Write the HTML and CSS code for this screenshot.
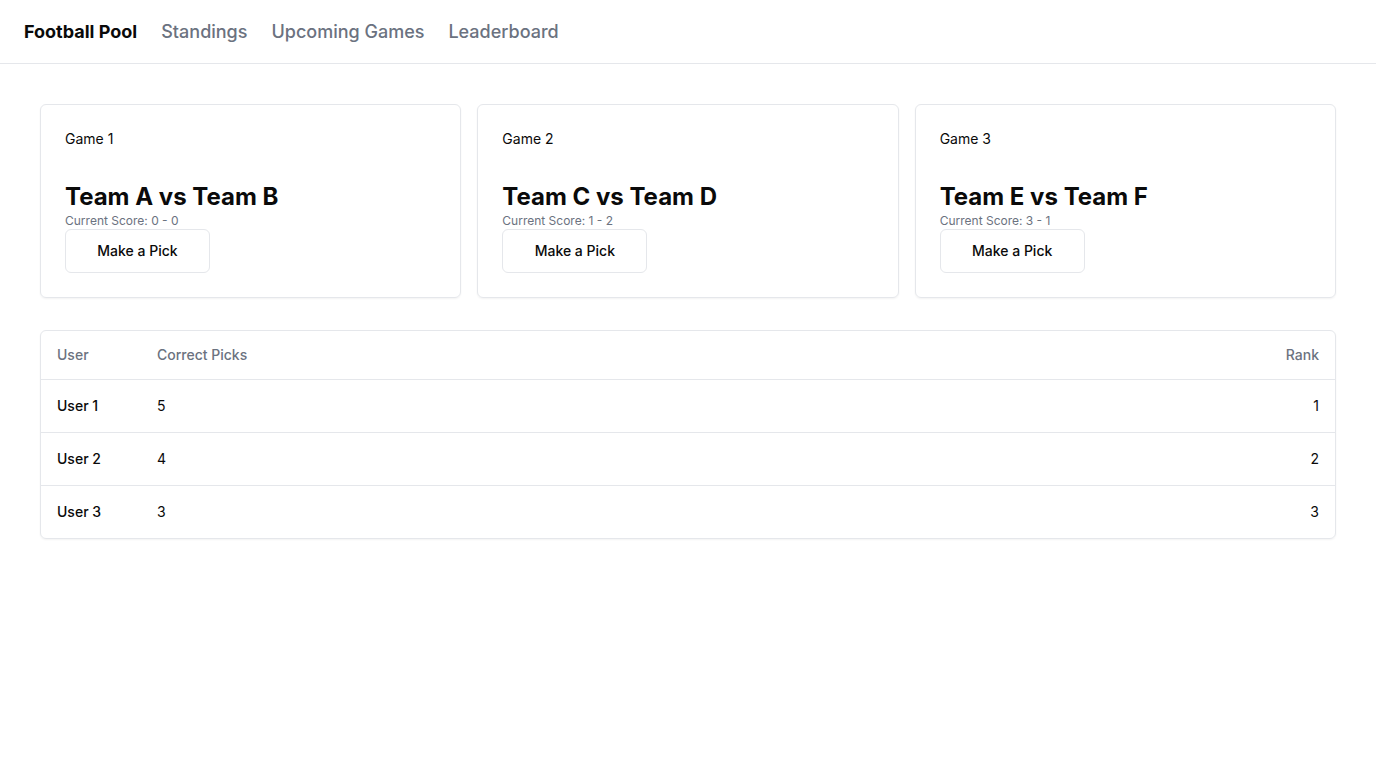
FILE: index.html
```html
<!DOCTYPE html>
<html>
<head>
<meta charset="utf-8">
<link rel="stylesheet" href="styles.css">
</head>
<body>
<header class="topbar">
  <nav class="nav">
    <a class="brand" href="#">Football Pool</a>
    <a class="nav-link" href="#">Standings</a>
    <a class="nav-link" href="#">Upcoming Games</a>
    <a class="nav-link" href="#">Leaderboard</a>
  </nav>
</header>
<main class="main">
  <section class="games">
    <div class="card">
      <div class="card-label">Game 1</div>
      <h2 class="match">Team A vs Team B</h2>
      <p class="score">Current Score: 0 - 0</p>
      <button class="pick-btn">Make a Pick</button>
    </div>
    <div class="card">
      <div class="card-label">Game 2</div>
      <h2 class="match">Team C vs Team D</h2>
      <p class="score">Current Score: 1 - 2</p>
      <button class="pick-btn">Make a Pick</button>
    </div>
    <div class="card">
      <div class="card-label">Game 3</div>
      <h2 class="match">Team E vs Team F</h2>
      <p class="score">Current Score: 3 - 1</p>
      <button class="pick-btn">Make a Pick</button>
    </div>
  </section>
  <section class="board">
    <table class="table">
      <thead>
        <tr><th class="col-user">User</th><th>Correct Picks</th><th class="right">Rank</th></tr>
      </thead>
      <tbody>
        <tr><td class="col-user name">User 1</td><td>5</td><td class="right">1</td></tr>
        <tr><td class="col-user name">User 2</td><td>4</td><td class="right">2</td></tr>
        <tr><td class="col-user name">User 3</td><td>3</td><td class="right">3</td></tr>
      </tbody>
    </table>
  </section>
</main>
</body>
</html>
```
FILE: styles.css
```css
* { box-sizing: border-box; }
body {
  margin: 0;
  font-family: Inter, "Noto Sans", sans-serif;
  color: #0a0a0a;
  background: #fff;
}
.topbar {
  height: 64px;
  border-bottom: 1px solid #e5e7eb;
  display: flex;
  align-items: center;
  padding: 0 24px;
}
.nav {
  display: flex;
  gap: 24px;
  align-items: center;
  font-size: 18px;
  line-height: 28px;
}
.nav a { text-decoration: none; }
.brand { font-weight: 700; color: #0a0a0a; }
.nav-link { font-weight: 500; color: #6b7280; }
.main { padding: 40px; }
.games {
  display: grid;
  grid-template-columns: repeat(3, 1fr);
  gap: 16px;
}
.card {
  border: 1px solid #e5e7eb;
  border-radius: 6px;
  box-shadow: 0 1px 2px rgba(0,0,0,0.05);
  padding: 24px;
  display: flex;
  flex-direction: column;
  align-items: flex-start;
}
.card-label {
  font-size: 14px;
  line-height: 20px;
  font-weight: 400;
  margin-bottom: 32px;
}
.match {
  margin: 0;
  font-size: 24px;
  line-height: 32px;
  font-weight: 700;
}
.score {
  margin: 0;
  font-size: 12px;
  line-height: 16px;
  color: #6b7280;
}
.pick-btn {
  height: 44px;
  width: 145px;
  padding: 0 0 1px;
  border: 1px solid #e5e7eb;
  border-radius: 6px;
  background: #fff;
  font-family: inherit;
  font-size: 14px;
  font-weight: 500;
  color: #0a0a0a;
}
.board {
  margin-top: 32px;
  border: 1px solid #e5e7eb;
  border-radius: 6px;
  box-shadow: 0 1px 2px rgba(0,0,0,0.05);
  overflow: hidden;
}
.table {
  width: 100%;
  border-collapse: collapse;
  font-size: 14px;
}
.table th {
  height: 48px;
  text-align: left;
  font-weight: 500;
  color: #6b7280;
  padding: 0 16px;
}
.table td {
  height: 53px;
  padding: 0 16px;
  border-top: 1px solid #e5e7eb;
}
.table .col-user { width: 100px; }
.table .name { font-weight: 500; }
.table .right { text-align: right; }
```
